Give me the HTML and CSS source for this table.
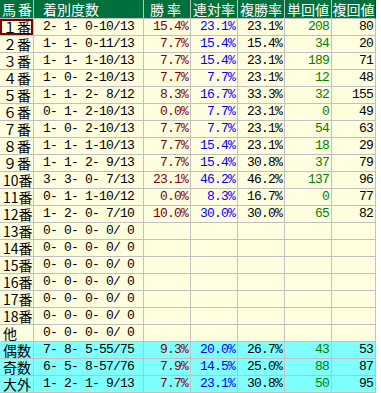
FILE: index.html
```html
<!DOCTYPE html>
<html lang="ja">
<head>
<meta charset="utf-8">
<title>馬番別成績</title>
<link rel="stylesheet" href="styles.css">
</head>
<body>
<table class="stats">
<thead>
<tr>
<th class="c-no">馬番</th>
<th class="c-rec">着別度数</th>
<th class="c-win">勝率</th>
<th class="c-p2">連対率</th>
<th class="c-p3">複勝率</th>
<th class="c-tan">単回値</th>
<th class="c-fuku">複回値</th>
</tr>
</thead>
<tbody>
<tr><td class="no sel">１番</td><td class="rec">2- 1- 0-10/13</td><td class="win">15.4%</td><td class="p2">23.1%</td><td class="p3">23.1%</td><td class="tan">208</td><td class="fuku">80</td></tr>
<tr><td class="no">２番</td><td class="rec">1- 1- 0-11/13</td><td class="win">7.7%</td><td class="p2">15.4%</td><td class="p3">15.4%</td><td class="tan">34</td><td class="fuku">20</td></tr>
<tr><td class="no">３番</td><td class="rec">1- 1- 1-10/13</td><td class="win">7.7%</td><td class="p2">15.4%</td><td class="p3">23.1%</td><td class="tan">189</td><td class="fuku">71</td></tr>
<tr><td class="no">４番</td><td class="rec">1- 0- 2-10/13</td><td class="win">7.7%</td><td class="p2">7.7%</td><td class="p3">23.1%</td><td class="tan">12</td><td class="fuku">48</td></tr>
<tr><td class="no">５番</td><td class="rec">1- 1- 2- 8/12</td><td class="win">8.3%</td><td class="p2">16.7%</td><td class="p3">33.3%</td><td class="tan">32</td><td class="fuku">155</td></tr>
<tr><td class="no">６番</td><td class="rec">0- 1- 2-10/13</td><td class="win">0.0%</td><td class="p2">7.7%</td><td class="p3">23.1%</td><td class="tan">0</td><td class="fuku">49</td></tr>
<tr><td class="no">７番</td><td class="rec">1- 0- 2-10/13</td><td class="win">7.7%</td><td class="p2">7.7%</td><td class="p3">23.1%</td><td class="tan">54</td><td class="fuku">63</td></tr>
<tr><td class="no">８番</td><td class="rec">1- 1- 1-10/13</td><td class="win">7.7%</td><td class="p2">15.4%</td><td class="p3">23.1%</td><td class="tan">18</td><td class="fuku">29</td></tr>
<tr><td class="no">９番</td><td class="rec">1- 1- 2- 9/13</td><td class="win">7.7%</td><td class="p2">15.4%</td><td class="p3">30.8%</td><td class="tan">37</td><td class="fuku">79</td></tr>
<tr><td class="no">10番</td><td class="rec">3- 3- 0- 7/13</td><td class="win">23.1%</td><td class="p2">46.2%</td><td class="p3">46.2%</td><td class="tan">137</td><td class="fuku">96</td></tr>
<tr><td class="no">11番</td><td class="rec">0- 1- 1-10/12</td><td class="win">0.0%</td><td class="p2">8.3%</td><td class="p3">16.7%</td><td class="tan">0</td><td class="fuku">77</td></tr>
<tr><td class="no">12番</td><td class="rec">1- 2- 0- 7/10</td><td class="win">10.0%</td><td class="p2">30.0%</td><td class="p3">30.0%</td><td class="tan">65</td><td class="fuku">82</td></tr>
<tr><td class="no">13番</td><td class="rec">0- 0- 0- 0/ 0</td><td></td><td></td><td></td><td></td><td></td></tr>
<tr><td class="no">14番</td><td class="rec">0- 0- 0- 0/ 0</td><td></td><td></td><td></td><td></td><td></td></tr>
<tr><td class="no">15番</td><td class="rec">0- 0- 0- 0/ 0</td><td></td><td></td><td></td><td></td><td></td></tr>
<tr><td class="no">16番</td><td class="rec">0- 0- 0- 0/ 0</td><td></td><td></td><td></td><td></td><td></td></tr>
<tr><td class="no">17番</td><td class="rec">0- 0- 0- 0/ 0</td><td></td><td></td><td></td><td></td><td></td></tr>
<tr><td class="no">18番</td><td class="rec">0- 0- 0- 0/ 0</td><td></td><td></td><td></td><td></td><td></td></tr>
<tr><td class="no">他</td><td class="rec">0- 0- 0- 0/ 0</td><td></td><td></td><td></td><td></td><td></td></tr>
<tr class="sum"><td class="no">偶数</td><td class="rec">7- 8- 5-55/75</td><td class="win">9.3%</td><td class="p2">20.0%</td><td class="p3">26.7%</td><td class="tan">43</td><td class="fuku">53</td></tr>
<tr class="sum"><td class="no">奇数</td><td class="rec">6- 5- 8-57/76</td><td class="win">7.9%</td><td class="p2">14.5%</td><td class="p3">25.0%</td><td class="tan">88</td><td class="fuku">87</td></tr>
<tr class="sum"><td class="no">大外</td><td class="rec">1- 2- 1- 9/13</td><td class="win">7.7%</td><td class="p2">23.1%</td><td class="p3">30.8%</td><td class="tan">50</td><td class="fuku">95</td></tr>
</tbody>
</table>
</body>
</html>
```

FILE: styles.css
```css
html, body {
  margin: 0;
  padding: 0;
  background: #ffffff;
}

.stats {
  border-collapse: separate;
  border-spacing: 0;
  table-layout: fixed;
  width: 376px;
  font-family: "Liberation Mono", "Noto Sans CJK JP", monospace;
  font-size: 13px;
  color: #000000;
}

.stats th,
.stats td {
  box-sizing: border-box;
  padding: 0;
  border-right: 1px solid #c0c0c0;
  border-bottom: 1px solid #c0c0c0;
  white-space: pre;
}

.stats th {
  height: 19px;
  line-height: 18px;
  background: #00703c;
  color: #ffffff;
  font-family: "Noto Sans CJK JP", sans-serif;
  font-size: 14px;
  font-weight: normal;
  text-align: center;
}

.stats th.c-fuku {
  border-right-color: #0a4a2a;
}

.c-no { width: 34px; }
.c-rec { width: 110px; }
.c-win { width: 47px; }
.c-p2 { width: 47px; }
.c-p3 { width: 47px; }
.c-tan { width: 47px; }
.c-fuku { width: 44px; }

.stats th.c-no { letter-spacing: 2px; text-align: left; padding-left: 2px; }
.stats th.c-rec { text-align: left; padding-left: 9px; }
.stats th.c-win { letter-spacing: 3px; }

.stats td {
  height: 17px;
  line-height: 16px;
  background: #ffffe0;
  letter-spacing: -0.8px;
  text-align: right;
  padding-right: 2px;
}

.stats tr.sum td {
  background: #80ffff;
}

.stats td.no {
  text-align: left;
  padding: 0 0 0 3px;
  font-family: "Noto Sans CJK JP", sans-serif;
  font-size: 14px;
  line-height: 16px;
  letter-spacing: 0;
}

.stats td.sel {
  box-shadow: inset 0 0 0 2px #800000;
}

.stats td.rec {
  text-align: left;
  padding-left: 9px;
}

.win { color: #800000; }
.p2 { color: #0000ff; }
.p3 { color: #000000; }
.tan { color: #008000; }
.fuku { color: #000000; }
```
